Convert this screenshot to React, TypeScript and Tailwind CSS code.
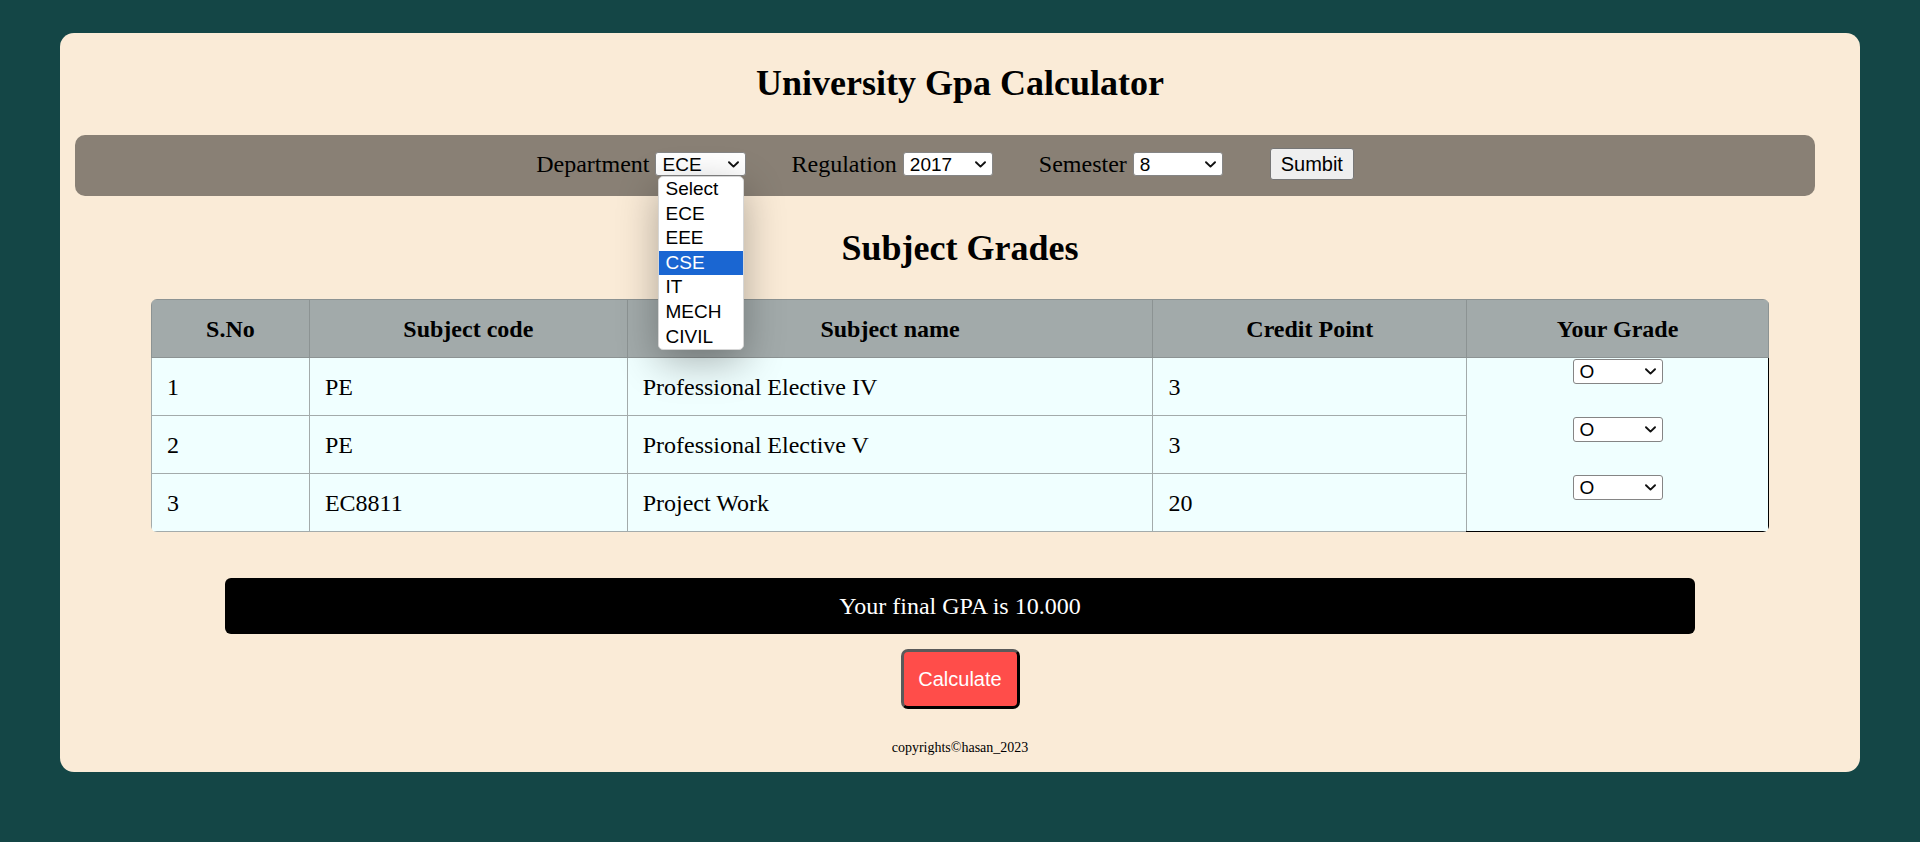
import React from 'react';

const serif = "font-['Liberation_Serif','Times_New_Roman',serif]";
const sans = "font-['Liberation_Sans',Arial,sans-serif]";

const subjects = [
  { sno: 1, code: 'PE', name: 'Professional Elective IV', credit: 3 },
  { sno: 2, code: 'PE', name: 'Professional Elective V', credit: 3 },
  { sno: 3, code: 'EC8811', name: 'Project Work', credit: 20 },
];

const departments = ['Select', 'ECE', 'EEE', 'CSE', 'IT', 'MECH', 'CIVIL'];

function Chevron() {
  return (
    <svg width="11" height="7" viewBox="0 0 11 7" fill="none" className="shrink-0">
      <path d="M1 1.2 L5.5 5.6 L10 1.2" stroke="#111" strokeWidth="1.9" strokeLinecap="round" strokeLinejoin="round" />
    </svg>
  );
}

// fake select box, looks like the closed native control
function SelectBox({ value, width, height }: { value: string; width: string; height: string }) {
  return (
    <div
      className={`${width} ${height} ${sans} flex items-center justify-between bg-white border border-[#858585] rounded-[3px] pl-[6px] pr-[6px] text-[19px] leading-none text-black`}
    >
      <span>{value}</span>
      <Chevron />
    </div>
  );
}

function Field({ label, value, className = '' }: { label: string; value: string; className?: string }) {
  return (
    <div className={`flex items-center ${className}`}>
      <span className="text-[24px] leading-none mr-[6px]">{label}</span>
      <SelectBox value={value} width="w-[90px]" height="h-[24px]" />
    </div>
  );
}

export default function App() {
  return (
    <div className={`min-h-screen bg-[#144646] pt-[33px] px-[60px] pb-[71px] ${serif} text-black`}>
      <div className="bg-[#faebd7] rounded-[14px] flex flex-col">
        <h1 className="mt-[30px] h-[41px] leading-[41px] text-[36px] font-bold text-center">
          University Gpa Calculator
        </h1>

        {/* filter bar */}
        <div className="mt-[31px] ml-[15px] mr-[45px] h-[61px] pb-[3px] rounded-[10px] bg-[#898075] flex items-center justify-center">
          <div className="flex items-center">
            <span className="text-[24px] leading-none mr-[6px]">Department</span>
            <div className="relative">
              <SelectBox value="ECE" width="w-[91px]" height="h-[24px]" />
              {/* open dropdown list */}
              <div
                className={`absolute left-[3px] top-[24px] w-[86px] z-20 bg-white rounded-[5px] border border-[#d6d6d6] overflow-hidden shadow-[0_12px_40px_rgba(0,0,0,0.3)] ${sans}`}
              >
                {departments.map((d) => (
                  <div
                    key={d}
                    className={`h-[24.6px] leading-[24.6px] pl-[6px] text-[19px] ${
                      d === 'CSE' ? 'bg-[#1a66d2] text-white' : 'text-black'
                    }`}
                  >
                    {d}
                  </div>
                ))}
              </div>
            </div>
          </div>
          <Field label="Regulation" value="2017" className="ml-[45px]" />
          <Field label="Semester" value="8" className="ml-[46px]" />
          <button
            className={`ml-[47px] w-[84px] h-[32px] bg-[#efefef] border border-[#767676] rounded-[3px] text-[20px] ${sans} text-black`}
          >
            Sumbit
          </button>
        </div>

        <h2 className="mt-[32px] h-[41px] leading-[41px] text-[36px] font-bold text-center">Subject Grades</h2>

        {/* grades table */}
        <div className="mt-[30px] w-[1618px] mx-auto rounded-[6px] overflow-hidden">
          <table className="w-full border-collapse text-[24px]">
            <thead>
              <tr className="bg-[#a2aaaa] h-[58px]">
                <th className="w-[158px] border border-[#8c9393] font-bold">S.No</th>
                <th className="w-[318px] border border-[#8c9393] font-bold">Subject code</th>
                <th className="w-[526px] border border-[#8c9393] font-bold">Subject name</th>
                <th className="w-[314px] border border-[#8c9393] font-bold">Credit Point</th>
                <th className="w-[302px] border border-[#8c9393] font-bold">Your Grade</th>
              </tr>
            </thead>
            <tbody className="bg-[#f0ffff]">
              {subjects.map((s, i) => (
                <tr key={s.sno} className="h-[58px]">
                  <td className="border border-[#a3abab] px-[15px]">{s.sno}</td>
                  <td className="border border-[#a3abab] px-[15px]">{s.code}</td>
                  <td className="border border-[#a3abab] px-[15px]">{s.name}</td>
                  <td className="border border-[#a3abab] px-[15px]">{s.credit}</td>
                  {i === 0 && (
                    <td
                      rowSpan={3}
                      className="align-top p-0 border-l border-l-[#a3abab] border-r border-r-black border-b border-b-black"
                    >
                      <div className="flex flex-col items-center gap-[33px] pt-[1px]">
                        {subjects.map((g) => (
                          <SelectBox key={g.sno} value="O" width="w-[90px]" height="h-[25px]" />
                        ))}
                      </div>
                    </td>
                  )}
                </tr>
              ))}
            </tbody>
          </table>
        </div>

        <div className="mt-[46px] w-[1470px] h-[56px] mx-auto bg-black rounded-[6px] flex items-center justify-center text-white text-[24px]">
          Your final GPA is 10.000
        </div>

        <button
          className={`mt-[15px] mx-auto w-[119px] h-[60px] bg-[#ff4d4a] text-white text-[20px] ${sans} rounded-[7px] border-[3px] border-t-[#5a5a5a] border-l-[#5a5a5a] border-r-black border-b-black`}
        >
          Calculate
        </button>

        <p className="mt-[31px] h-[16px] leading-[16px] text-[14px] text-center mb-[16px]">copyrights©hasan_2023</p>
      </div>
    </div>
  );
}
